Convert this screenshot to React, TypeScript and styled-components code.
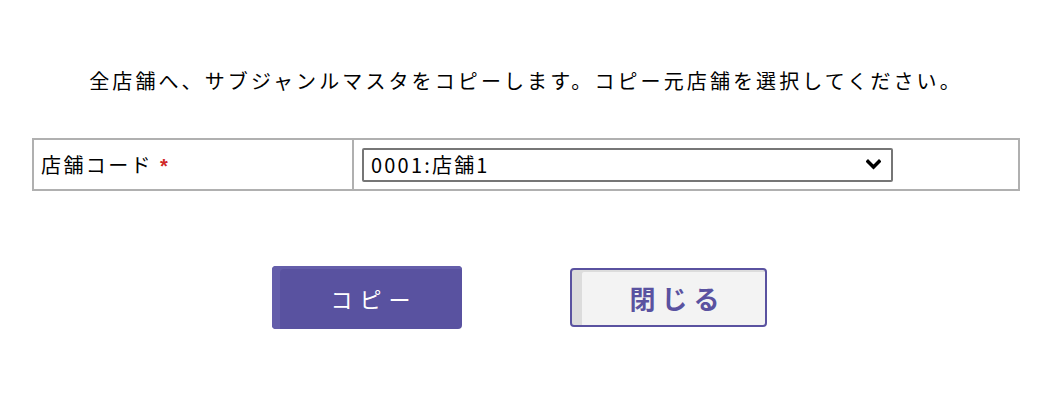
import React from 'react';
import styled, { createGlobalStyle } from 'styled-components';

const GlobalStyle = createGlobalStyle`
  html, body {
    margin: 0;
    padding: 0;
    background: #ffffff;
  }
  body {
    font-family: "Noto Sans CJK JP", "Noto Sans", sans-serif;
    color: #000;
  }
`;

const Page = styled.div`
  width: 1050px;
  height: 402px;
  box-sizing: border-box;
  padding-top: 69px;
`;

const Message = styled.p`
  margin: 0;
  text-align: center;
  font-size: 20px;
  line-height: 24px;
  letter-spacing: 3.1px;
  padding-left: 2px;
`;

const FormTable = styled.div`
  margin: 45px 0 0 32px;
  width: 988px;
  box-sizing: border-box;
  border: 2px solid #b0b0b0;
  display: flex;
  height: 53px;
`;

const LabelCell = styled.div`
  width: 320px;
  border-right: 2px solid #b0b0b0;
  display: flex;
  align-items: center;
  padding-left: 7px;
  box-sizing: border-box;
  font-size: 20px;
  letter-spacing: 2.4px;
`;

const Required = styled.span`
  color: #d02828;
  font-family: "Liberation Sans", sans-serif;
  font-weight: bold;
  font-size: 20px;
  margin-left: 7px;
  margin-top: 4px;
`;

const ValueCell = styled.div`
  flex: 1;
  display: flex;
  align-items: center;
  padding-left: 8px;
`;

const SelectWrap = styled.div`
  position: relative;
  width: 531px;
  height: 34px;
`;

const Select = styled.select`
  appearance: none;
  width: 100%;
  height: 100%;
  box-sizing: border-box;
  border: 2px solid #767676;
  border-radius: 2px;
  background: #fff;
  padding: 0 0 0 7px;
  font-family: "Noto Sans CJK JP", "Noto Sans", sans-serif;
  font-size: 20px;
  letter-spacing: 2.2px;
  color: #000;
  outline: none;
`;

const Chevron = styled.svg`
  position: absolute;
  right: 12px;
  top: 11px;
  pointer-events: none;
`;

const ButtonRow = styled.div`
  display: flex;
  justify-content: center;
  align-items: center;
  gap: 108px;
  margin-top: 75px;
  padding-right: 11px;
`;

const BaseButton = styled.button`
  box-sizing: border-box;
  border-radius: 4px;
  cursor: pointer;
  font-family: "Noto Sans CJK JP", "Noto Sans", sans-serif;
  display: flex;
  align-items: center;
  justify-content: center;
`;

const PrimaryButton = styled(BaseButton)`
  width: 190px;
  height: 63px;
  border: none;
  background: #5952a0;
  box-shadow: inset 8px 3px 0 0 #645eaa;
  color: #fff;
  font-size: 22px;
  letter-spacing: 7px;
  padding: 0 0 0 14px;
`;

const SecondaryButton = styled(BaseButton)`
  width: 197px;
  height: 59px;
  border: 2px solid #5a52a0;
  background: #f3f3f3;
  box-shadow: inset 10px 2px 0 0 #dcdcdc;
  color: #5a52a0;
  font-size: 26px;
  font-weight: bold;
  letter-spacing: 6px;
  padding: 0 0 0 18px;
`;

export default function App() {
  return (
    <>
      <GlobalStyle />
      <Page>
        <Message>
          全店舗へ、サブジャンルマスタをコピーします。コピー元店舗を選択してください。
        </Message>
        <FormTable>
          <LabelCell>
            店舗コード
            <Required>*</Required>
          </LabelCell>
          <ValueCell>
            <SelectWrap>
              <Select defaultValue="0001">
                <option value="0001">0001:店舗1</option>
              </Select>
              <Chevron width="15" height="11" viewBox="0 0 15 11">
                <path d="M2 2.5 L7.5 8 L13 2.5" fill="none" stroke="#000" strokeWidth="3.4" strokeLinecap="square" />
              </Chevron>
            </SelectWrap>
          </ValueCell>
        </FormTable>
        <ButtonRow>
          <PrimaryButton>コピー</PrimaryButton>
          <SecondaryButton>閉じる</SecondaryButton>
        </ButtonRow>
      </Page>
    </>
  );
}
